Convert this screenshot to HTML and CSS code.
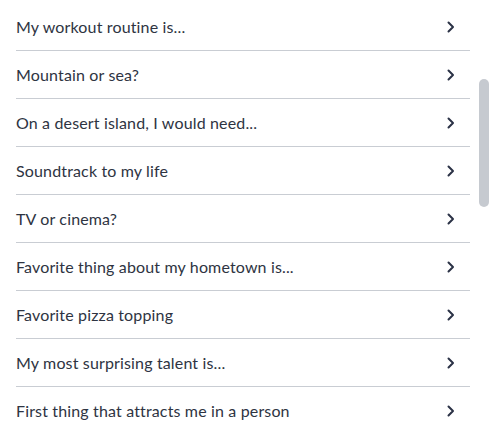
FILE: index.html
```html
<!DOCTYPE html>
<html>
<head>
<meta charset="utf-8">
<link rel="stylesheet" href="styles.css">
</head>
<body>
<ul class="list">
  <li class="row"><span class="label">My workout routine is...</span><svg class="chev" viewBox="0 0 8 12"><path d="M1.5 1.5 L6 6 L1.5 10.5"/></svg></li>
  <li class="row"><span class="label">Mountain or sea?</span><svg class="chev" viewBox="0 0 8 12"><path d="M1.5 1.5 L6 6 L1.5 10.5"/></svg></li>
  <li class="row"><span class="label">On a desert island, I would need...</span><svg class="chev" viewBox="0 0 8 12"><path d="M1.5 1.5 L6 6 L1.5 10.5"/></svg></li>
  <li class="row"><span class="label">Soundtrack to my life</span><svg class="chev" viewBox="0 0 8 12"><path d="M1.5 1.5 L6 6 L1.5 10.5"/></svg></li>
  <li class="row"><span class="label">TV or cinema?</span><svg class="chev" viewBox="0 0 8 12"><path d="M1.5 1.5 L6 6 L1.5 10.5"/></svg></li>
  <li class="row"><span class="label">Favorite thing about my hometown is...</span><svg class="chev" viewBox="0 0 8 12"><path d="M1.5 1.5 L6 6 L1.5 10.5"/></svg></li>
  <li class="row"><span class="label">Favorite pizza topping</span><svg class="chev" viewBox="0 0 8 12"><path d="M1.5 1.5 L6 6 L1.5 10.5"/></svg></li>
  <li class="row"><span class="label">My most surprising talent is...</span><svg class="chev" viewBox="0 0 8 12"><path d="M1.5 1.5 L6 6 L1.5 10.5"/></svg></li>
  <li class="row"><span class="label">First thing that attracts me in a person</span><svg class="chev" viewBox="0 0 8 12"><path d="M1.5 1.5 L6 6 L1.5 10.5"/></svg></li>
</ul>
<div class="scrollbar"><div class="thumb"></div></div>
</body>
</html>
```
FILE: styles.css
```css
html, body {
  margin: 0;
  padding: 0;
  background: #ffffff;
  overflow: hidden;
}
body {
  width: 500px;
  height: 440px;
  position: relative;
  font-family: Lato, "Open Sans", sans-serif;
}
.list {
  list-style: none;
  margin: 0;
  padding: 3px 30px 0 16px;
}
.row {
  display: flex;
  align-items: center;
  justify-content: space-between;
  height: 47px;
  border-bottom: 1px solid #c9cdd3;
}
.row:last-child {
  border-bottom-color: transparent;
}
.label {
  font-size: 16px;
  color: #2e3442;
  letter-spacing: 0.15px;
}
.chev {
  width: 8px;
  height: 12px;
  margin-right: 15px;
  fill: none;
  stroke: #2b3246;
  stroke-width: 2;
  stroke-linecap: round;
  stroke-linejoin: round;
}
.scrollbar {
  position: absolute;
  top: 0;
  right: 11px;
  width: 10px;
  height: 440px;
}
.thumb {
  margin-top: 79px;
  height: 128px;
  border-radius: 5px;
  background: #c6cad0;
}
```
